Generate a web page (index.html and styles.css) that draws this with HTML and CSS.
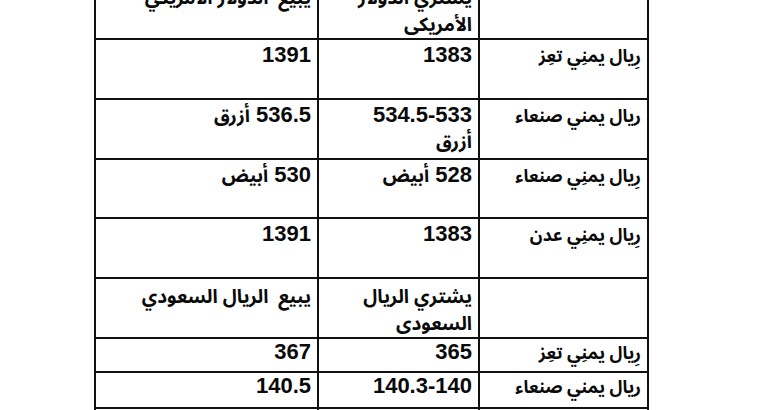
FILE: index.html
```html
<!DOCTYPE html>
<html lang="ar" dir="rtl">
<head>
<meta charset="utf-8">
<title>أسعار الصرف</title>
<link rel="stylesheet" href="styles.css">
</head>
<body>
<table class="rates">
  <colgroup>
    <col class="c-label">
    <col class="c-buy">
    <col class="c-sell">
  </colgroup>
  <tr class="r-head1">
    <td></td>
    <td><span class="ar">يشتري الدولار<br>الأمريكى</span></td>
    <td><span class="ar">يبيع&nbsp; الدولار الأمريكي</span></td>
  </tr>
  <tr class="r-tall">
    <td class="label"><span class="ar">رِيال يمنِي تعِز</span></td>
    <td>1383</td>
    <td>1391</td>
  </tr>
  <tr class="r-tall">
    <td class="label"><span class="ar">ريال يمني صنعاء</span></td>
    <td>534.5-533<br><span class="ar">أزرق</span></td>
    <td>536.5 <span class="ar">أزرق</span></td>
  </tr>
  <tr class="r-tall r-59">
    <td class="label"><span class="ar">رِيال يمنِي صنعاء</span></td>
    <td>528 <span class="ar">أبيض</span></td>
    <td>530 <span class="ar">أبيض</span></td>
  </tr>
  <tr class="r-tall">
    <td class="label"><span class="ar">رِيال يمنِي عدن</span></td>
    <td>1383</td>
    <td>1391</td>
  </tr>
  <tr class="r-head2">
    <td></td>
    <td><span class="ar">يشتري الريال<br>السعودى</span></td>
    <td><span class="ar">يبيع&nbsp; الريال السعودي</span></td>
  </tr>
  <tr class="r-short">
    <td class="label"><span class="ar">رِيال يمنِي تعِز</span></td>
    <td>365</td>
    <td>367</td>
  </tr>
  <tr class="r-short2">
    <td class="label"><span class="ar">ريال يمني صنعاء</span></td>
    <td>140.3-140</td>
    <td>140.5</td>
  </tr>
  <tr class="r-short2">
    <td class="label"><span class="ar">رِيال يمنِي عدن</span></td>
    <td>365</td>
    <td>367</td>
  </tr>
</table>
</body>
</html>
```

FILE: styles.css
```css
html, body {
  margin: 0;
  padding: 0;
  background: #ffffff;
}

body {
  font-family: "Liberation Sans", "DejaVu Sans", sans-serif;
  color: #0a0a0a;
  overflow: hidden;
}

.rates {
  direction: rtl;
  border-collapse: collapse;
  table-layout: fixed;
  width: 553px;
  margin: -19px 111px 0 0;
  font-size: 22px;
  font-weight: bold;
  line-height: 26px;
}

.c-label { width: 169px; }
.c-buy { width: 161px; }
.c-sell { width: 223px; }

.rates td {
  border: 2px solid #111111;
  padding: 2px 6px 0 6px;
  vertical-align: top;
  text-align: right;
  white-space: nowrap;
  overflow: hidden;
}

.ar {
  font-family: "Noto Sans Arabic", "Noto Naskh Arabic", "DejaVu Sans Condensed", "DejaVu Sans", sans-serif;
  font-size: 19px;
  font-weight: bold;
}

.label .ar {
  font-size: 17.5px;
}

.r-head1 { height: 57px; }
.r-head1 td { padding-top: 1px; }

.r-tall { height: 60px; }
.r-59 { height: 59px; }

.r-head2 { height: 57px; }
.r-head2 td { padding-top: 4px; }

.r-short { height: 34px; }
.r-short td { padding-top: 0; }

.r-short2 { height: 36px; }
.r-short2 td { padding-top: 0; }
```
